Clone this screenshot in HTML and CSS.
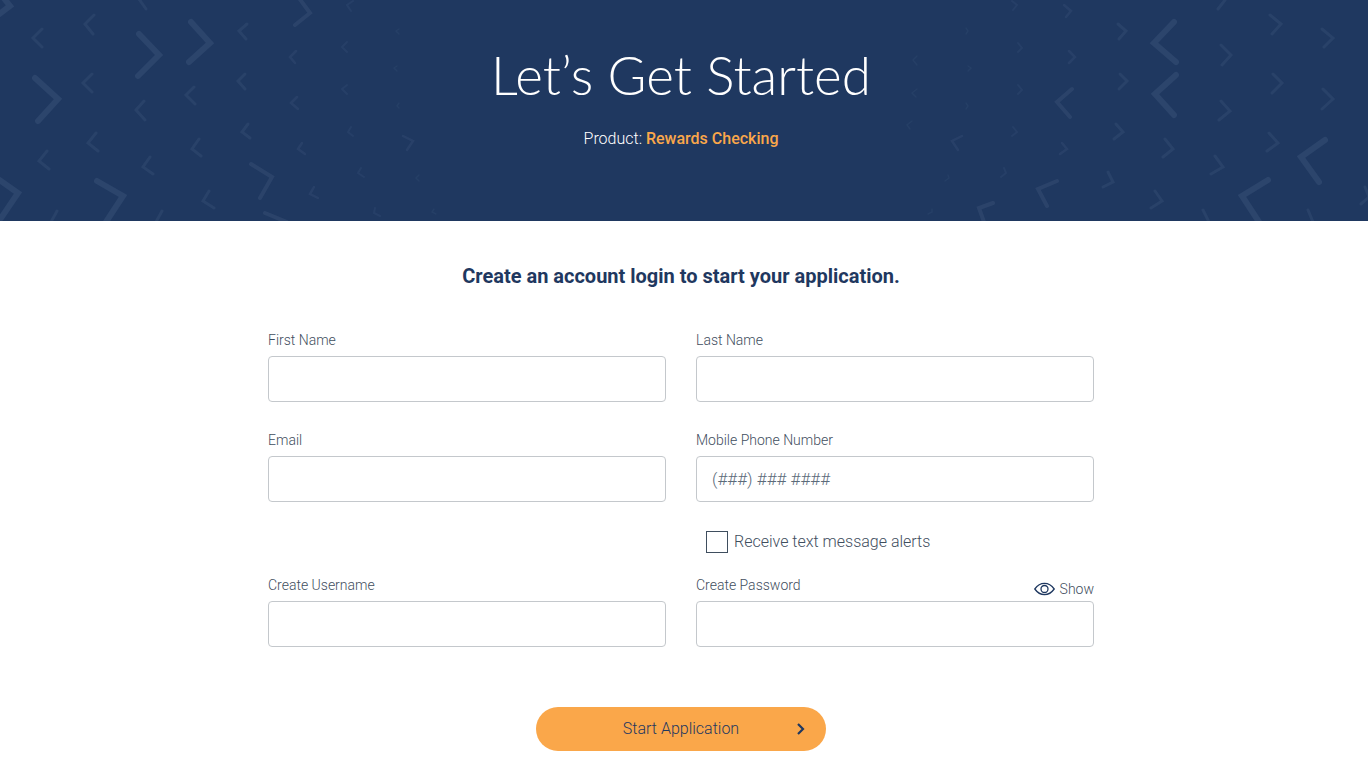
FILE: index.html
```html
<!DOCTYPE html>
<html lang="en">
  <head>
    <meta charset="UTF-8" />
    <meta name="viewport" content="width=device-width, initial-scale=1.0" />
    <title>Let’s Get Started</title>
    <link rel="stylesheet" href="styles.css">
  </head>
  <body>
    <header class="hero">
      <svg class="hero-pattern" viewBox="0 0 1368 221" preserveAspectRatio="xMidYMid slice" aria-hidden="true">
        <!-- large arrows -->
        <g stroke-width="6">
          <path d="M3-3 10 6-2 15M35 78 58 99 38 121M139 34 159 55 138 76M191 22 210 43 189 62M-2 179 18 193 1 218M97 181 123 196 106 222" />
          <path d="M1174 22 1154 43 1176 62M1176 75 1155 94 1174 115M1325 140 1301 157 1319 182M1268 180 1242 196 1259 222" />
        </g>
        <g stroke-width="4" opacity=".9">
          <path d="M299-2 310 13 295 25M251 164 272 177 260 198M265 213 287 222" />
          <path d="M1072 89 1057 102 1070 117M1057 181 1038 189 1047 206M993 203 979 208 984 222" />
        </g>
        <!-- small arrows, left -->
        <g stroke-width="3" opacity=".8">
          <path d="M42 29 33 38 42 47M94 15 85 24 93 34M92 74 83 83 92 92M144 101 136 110 145 120M194 87 186 95 195 104M96 133 88 143 98 151M47 151 39 161 49 169M150 157 143 167 153 174M199 139 192 149 201 156M209 191 203 201 214 208M139-1 146 9M57 211 51 222M162 211 156 222" />
          <path d="M247 24 239 31 246 39M245 74 238 81 245 89M248 124 242 132 250 138" />
        </g>
        <g stroke-width="2.5" opacity=".7">
          <path d="M296 51 290 57 295 63M297 97 291 103 298 109M302 143 298 149 305 154M314 187 310 194 318 198M403 136 413 141 407 150" />
        </g>
        <g stroke-width="2" opacity=".6">
          <path d="M347 42 342 47 347 52M347 85 342 89 347 94M351 127 348 132 353 136M361 168 358 173 364 177M375 208 374 213 380 216M353 1 347 5 351 11" />
        </g>
        <g stroke-width="1.5" opacity=".5">
          <path d="M399 29 396 31 399 34M397 66 394 68 397 71M399 103 397 106 399 108M419 175 416 178 419 181M434 209 432 212 436 214" />
        </g>
        <!-- small arrows, right -->
        <g stroke-width="3" opacity=".8">
          <path d="M1225 0 1218 9M1270 15 1281 24 1272 34M1322 29 1333 38 1324 47M1221 45 1231 55 1222 65M1273 74 1282 83 1272 93M1221 101 1230 111 1219 120M1323 89 1333 99 1322 109M1269 133 1278 143 1267 151M1165 139 1173 149 1163 157M1215 156 1223 167 1211 174M1155 191 1162 201 1151 208M1203 210 1209 222M1308 210 1313 222M1365 187 1369 197 1361 204" />
          <path d="M1118 24 1126 31 1119 39M1120 74 1127 81 1119 89M1116 124 1123 132 1114 139M1108 172 1113 182 1103 187" />
        </g>
        <g stroke-width="2.5" opacity=".7">
          <path d="M1064 5 1071 11 1066 17M1069 51 1075 57 1069 63M1062 143 1067 149 1060 154M962 136 952 141 958 150" />
        </g>
        <g stroke-width="2" opacity=".6">
          <path d="M1012 1 1017 5 1013 10M1018 43 1022 48 1018 52M1018 85 1022 90 1018 94M1013 127 1017 132 1012 136M1004 168 1006 173 1001 177" />
        </g>
        <g stroke-width="1.5" opacity=".5">
          <path d="M917 56 913 60 917 65M917 89 912 93 916 97M912 121 907 125 910 129M966 28 968 31 966 34M968 66 971 68 968 71M966 103 968 106 966 109M948 175 949 178 945 181M932 209 932 212 928 214" />
        </g>
      </svg>
      <div class="hero-text">
        <h1>Let’s Get Started</h1>
        <p>Product: <strong>Rewards Checking</strong></p>
      </div>
    </header>

    <main>
      <h2>Create an account login to start your application.</h2>
      <form>
        <div class="fields">
          <div class="field">
            <label for="first-name">First Name</label>
            <input type="text" id="first-name" />
          </div>
          <div class="field">
            <label for="last-name">Last Name</label>
            <input type="text" id="last-name" />
          </div>
          <div class="field">
            <label for="email">Email</label>
            <input type="email" id="email" />
          </div>
          <div class="field">
            <label for="phone">Mobile Phone Number</label>
            <input type="tel" id="phone" placeholder="(###) ### ####" />
          </div>
        </div>

        <div class="alerts">
          <input type="checkbox" id="alerts" />
          <label for="alerts">Receive text message alerts</label>
        </div>

        <div class="fields">
          <div class="field">
            <label for="username">Create Username</label>
            <input type="text" id="username" />
          </div>
          <div class="field">
            <div class="label-row">
              <label for="password">Create Password</label>
              <button type="button" class="show-btn">
                <svg width="21" height="14" viewBox="0 0 21 14" fill="none" stroke="#1f3860" stroke-width="1.3" aria-hidden="true">
                  <path d="M.8 7C3.500 3.200 6.500 1.400 10.500 1.400S17.500 3.200 20.200 7C17.500 10.800 14.500 12.600 10.500 12.600S3.500 10.800.8 7Z" />
                  <circle cx="10.500" cy="7" r="3.500" />
                </svg>
                Show
              </button>
            </div>
            <input type="password" id="password" />
          </div>
        </div>

        <button type="submit" class="submit-btn">
          Start Application
          <svg class="arrow" width="8" height="12" viewBox="0 0 8 12" fill="none" stroke="#1f3860" stroke-width="2.200" aria-hidden="true">
            <path d="M1 1 6 6 1 11" />
          </svg>
        </button>
      </form>
    </main>
  </body>
</html>
```
FILE: styles.css
```css
* {
  box-sizing: border-box;
}
body {
  margin: 0;
  font-family: Roboto, sans-serif;
  font-weight: 300;
  font-size: 16px;
  line-height: 24px;
  color: #3f4e5e;
  background: #fff;
}
.hero {
  position: relative;
  min-height: 221px;
  padding: 43px 6px 0 0;
  background: #1f3860;
  color: #fff;
  text-align: center;
}
.hero-pattern {
  position: absolute;
  top: 0;
  left: 0;
  width: 100%;
  height: 100%;
  fill: none;
  stroke: #2c456c;
  stroke-linecap: round;
}
.hero-text {
  position: relative;
}
h1 {
  margin: 0 0 20px;
  font-family: Lato, sans-serif;
  font-weight: 300;
  font-size: 53px;
  line-height: 64px;
}
.hero p {
  margin: 0;
}
.hero strong {
  font-weight: 500;
  color: #faa74a;
}
main {
  padding: 43px 22px 28px 16px;
}
h2 {
  margin: 0 0 40px;
  font-weight: 700;
  font-size: 20px;
  line-height: 24px;
  color: #1f3860;
  text-align: center;
}
form {
  max-width: 826px;
  margin: 0 auto;
}
.fields {
  display: grid;
  grid-template-columns: 1fr 1fr;
  gap: 26px 30px;
}
.field {
  display: flex;
  flex-direction: column;
}
.field label {
  font-size: 14px;
  line-height: 24px;
  margin-bottom: 4px;
}
.field input {
  width: 100%;
  height: 46px;
  padding: 0 15px;
  border: 1px solid #c4c8cc;
  border-radius: 4px;
  font: inherit;
  color: #3f4e5e;
  background: #fff;
}
.field input::placeholder {
  font-size: 17px;
  color: #5c6b7a;
  opacity: 1;
}
.alerts {
  display: flex;
  align-items: center;
  gap: 6px;
  margin: 28px 0 19px;
  padding-left: 438px;
}
.alerts input {
  appearance: none;
  width: 22px;
  height: 22px;
  margin: 0;
  border: 1px solid #3f4e5e;
  background: #fff;
}
.label-row {
  display: flex;
  justify-content: space-between;
}
.show-btn {
  display: flex;
  align-items: center;
  gap: 5px;
  padding: 4px 0 0;
  border: none;
  background: none;
  font: inherit;
  font-size: 14px;
  line-height: 20px;
  color: #3f4e5e;
  cursor: pointer;
}
.submit-btn {
  position: relative;
  display: block;
  width: 290px;
  height: 44px;
  margin: 60px auto 0;
  border: none;
  border-radius: 22px;
  font: inherit;
  color: #1f3860;
  background: #faa74a;
  cursor: pointer;
}
.submit-btn .arrow {
  position: absolute;
  top: 16px;
  right: 21px;
}
```
